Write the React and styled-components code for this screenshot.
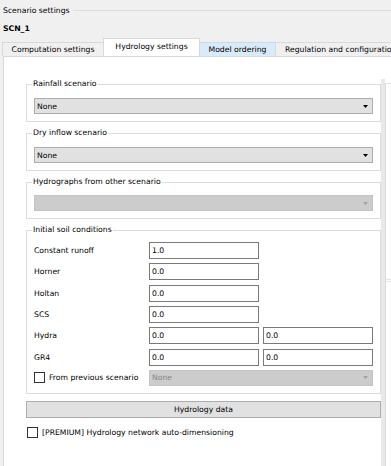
import React from 'react'
import styled, { createGlobalStyle } from 'styled-components'

const GlobalStyle = createGlobalStyle`
  html, body {
    margin: 0;
    padding: 0;
    background: #f0f0f0;
  }
  body {
    font-family: "DejaVu Sans", "Liberation Sans", sans-serif;
    font-size: 7.7px;
    color: #000;
  }
  * { box-sizing: border-box; }
`

const Window = styled.div`
  width: 391px;
  height: 466px;
  overflow: hidden;
  display: flex;
  flex-direction: column;
`

const OuterTitle = styled.div`
  display: flex;
  align-items: center;
  height: 14px;
  margin-top: 3px;
  padding-left: 3px;
  white-space: nowrap;

  &:after {
    content: '';
    flex: 1;
    border-top: 1px solid #dcdcdc;
    margin-left: 3px;
  }
`

const ScenarioName = styled.div`
  font-weight: bold;
  line-height: 10px;
  margin: 7px 0 0 3px;
`

const TabStrip = styled.div`
  display: flex;
  align-items: flex-end;
  height: 18px;
  margin-top: 4px;
  padding-left: 3px;
  position: relative;
  z-index: 1;
  overflow: hidden;
`

const Tab = styled.div`
  flex: none;
  width: ${p => p.$w}px;
  height: ${p => (p.$active ? 19 : 14)}px;
  margin-bottom: ${p => (p.$active ? -1 : 0)}px;
  margin-left: -1px;
  display: flex;
  align-items: center;
  justify-content: ${p => (p.$start ? 'flex-start' : 'center')};
  padding-left: ${p => (p.$start ? 9 : 0)}px;
  padding-bottom: ${p => (p.$active ? 3 : 0)}px;
  white-space: nowrap;
  overflow: hidden;
  background: ${p => (p.$active ? '#fff' : p.$hover ? '#d9ebf9' : '#f0f0f0')};
  border: 1px solid ${p => (p.$hover ? '#c4dcf2' : '#d9d9d9')};
  border-bottom: none;
`

const Pane = styled.div`
  flex: 1;
  display: flex;
  margin-left: 3px;
  padding: 22px 0 0 22px;
  background: #fff;
  border-top: 1px solid #d9d9d9;
  border-left: 1px solid #d9d9d9;
`

const Column = styled.div`
  flex: none;
  width: 355px;
  display: flex;
  flex-direction: column;
`

const Splitter = styled.div`
  flex: none;
  width: 4px;
  background: #e9e9e9;
`

const SidePanel = styled.div`
  flex: 1;
  margin-top: 4px;
  border-left: 1px solid #dcdcdc;
  border-top: 1px solid #e4e4e4;
  display: flex;
  flex-direction: column;
`

const SideMark = styled.div`
  margin-top: 195px;
  height: 3px;
  border-top: 1px solid #e4e4e4;
  border-bottom: 1px solid #e4e4e4;
`

const Group = styled.fieldset`
  margin: ${p => (p.$first ? 0 : 6)}px 0 0;
  padding: ${p => p.$top}px 7px 7px;
  border: 1px solid #dcdcdc;
  min-width: 0;
`

const Legend = styled.legend`
  padding: 0 1px;
  margin-left: -2px;
  line-height: 10px;
  height: 10px;
  white-space: nowrap;
`

const Combo = styled.div`
  height: 16px;
  display: flex;
  align-items: center;
  padding: 0 4px 0 2px;
  background: ${p => (p.$disabled ? '#cccccc' : '#e1e1e1')};
  border: 1px solid ${p => (p.$disabled ? '#c4c4c4' : '#adadad')};
  color: ${p => (p.$disabled ? '#858585' : '#000')};
  grid-column: ${p => p.$span || 'auto'};
`

const Arrow = styled.svg`
  margin-left: auto;
  flex: none;
`

const Form = styled.div`
  display: grid;
  grid-template-columns: 111px 110px 110px;
  column-gap: 4px;
  row-gap: 4.33px;
  align-items: center;
`

const Label = styled.div`
  white-space: nowrap;
`

const Field = styled.input`
  height: 17px;
  width: 100%;
  margin: 0;
  padding: 0 2px;
  border: 1px solid #7a7a7a;
  background: #fff;
  font: inherit;
  color: #000;
  outline: none;
`

const CheckRow = styled.label`
  display: flex;
  align-items: center;
  gap: 4px;
  white-space: nowrap;
  margin-top: ${p => p.$top || 0}px;
  padding-left: ${p => p.$left || 0}px;
`

const Box = styled.span`
  flex: none;
  width: 11px;
  height: 11px;
  border: 1px solid #333;
  background: #fff;
`

const Button = styled.div`
  margin-top: 7px;
  height: 17px;
  display: flex;
  align-items: center;
  justify-content: center;
  background: #e1e1e1;
  border: 1px solid #adadad;
`

function DropArrow({ disabled }) {
  return (
    <Arrow width="5" height="3" viewBox="0 0 5 3">
      <path d="M0 0H5L2.5 3Z" fill={disabled ? '#a3a3a3' : '#000'} />
    </Arrow>
  )
}

function ComboBox({ value, disabled, span }) {
  return (
    <Combo $disabled={disabled} $span={span}>
      <span>{value}</span>
      <DropArrow disabled={disabled} />
    </Combo>
  )
}

const soilRows = [
  { label: 'Constant runoff', values: ['1.0'] },
  { label: 'Horner', values: ['0.0'] },
  { label: 'Holtan', values: ['0.0'] },
  { label: 'SCS', values: ['0.0'] },
  { label: 'Hydra', values: ['0.0', '0.0'] },
  { label: 'GR4', values: ['0.0', '0.0'] },
]

export default function App() {
  return (
    <Window>
      <GlobalStyle />
      <OuterTitle>Scenario settings</OuterTitle>
      <ScenarioName>SCN_1</ScenarioName>
      <TabStrip>
        <Tab $w={102}>Computation settings</Tab>
        <Tab $w={97} $active>Hydrology settings</Tab>
        <Tab $w={77} $hover>Model ordering</Tab>
        <Tab $w={120} $start>Regulation and configuration</Tab>
      </TabStrip>
      <Pane>
        <Column>
          <Group $first $top={9}>
            <Legend>Rainfall scenario</Legend>
            <ComboBox value="None" />
          </Group>
          <Group $top={9}>
            <Legend>Dry inflow scenario</Legend>
            <ComboBox value="None" />
          </Group>
          <Group $top={8}>
            <Legend>Hydrographs from other scenario</Legend>
            <ComboBox value="" disabled />
          </Group>
          <Group $top={7}>
            <Legend>Initial soil conditions</Legend>
            <Form>
              {soilRows.map(row => (
                <React.Fragment key={row.label}>
                  <Label>{row.label}</Label>
                  {row.values.map((v, i) => (
                    <Field key={i} defaultValue={v} />
                  ))}
                  {row.values.length === 1 && <span />}
                </React.Fragment>
              ))}
              <CheckRow>
                <Box />
                From previous scenario
              </CheckRow>
              <ComboBox value="None" disabled span="2 / 4" />
            </Form>
          </Group>
          <Button>Hydrology data</Button>
          <CheckRow $top={9} $left={1}>
            <Box />
            [PREMIUM] Hydrology network auto-dimensioning
          </CheckRow>
        </Column>
        <Splitter />
        <SidePanel>
          <SideMark />
        </SidePanel>
      </Pane>
    </Window>
  )
}
